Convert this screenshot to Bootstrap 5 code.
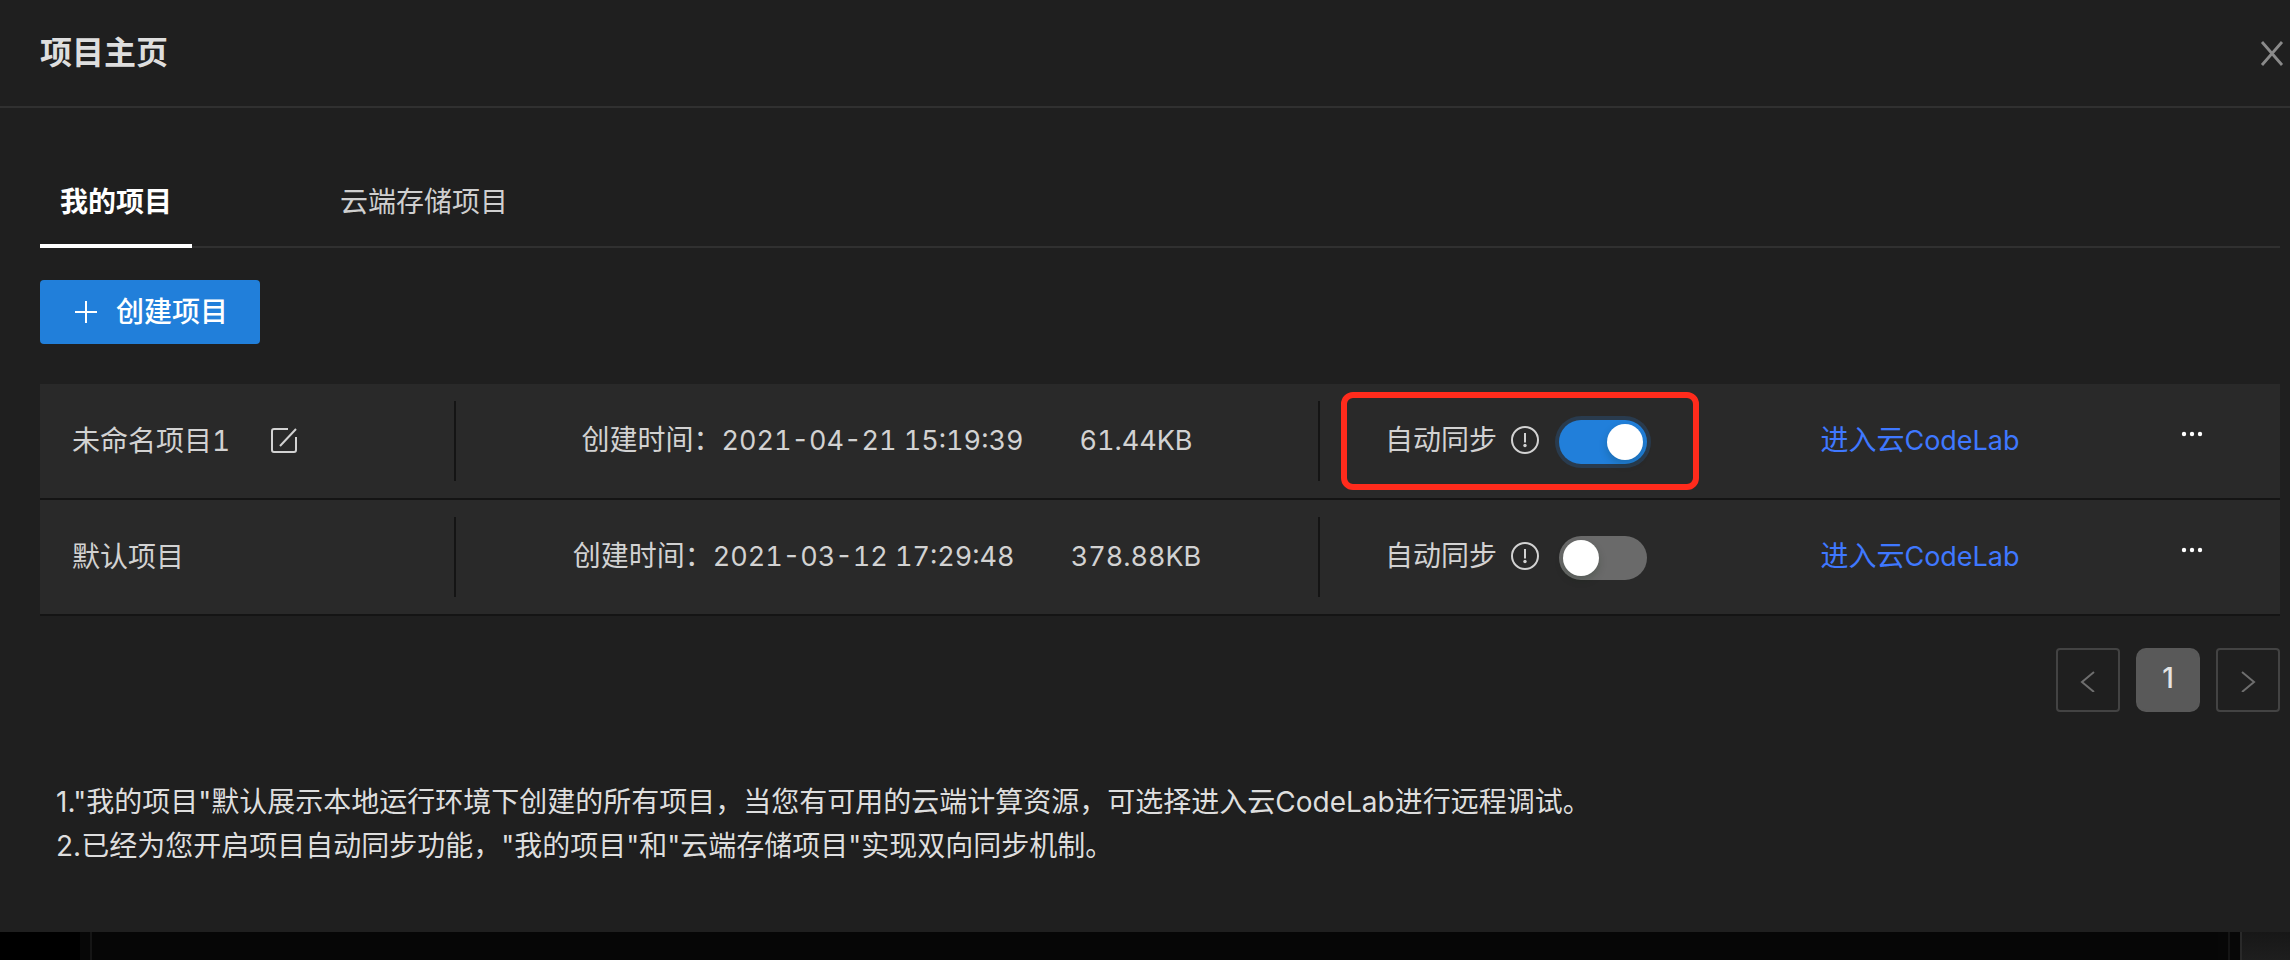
<!DOCTYPE html>
<html lang="zh-CN" data-bs-theme="dark">
<head>
<meta charset="utf-8">
<meta name="viewport" content="width=device-width, initial-scale=1">
<title>项目主页</title>
<link rel="stylesheet" href="https://cdn.jsdelivr.net/npm/bootstrap@5.3.0/dist/css/bootstrap.min.css">
<style>
  body {
    font-family: Inter, "Noto Sans CJK SC", sans-serif;
    font-size: 28px;
    line-height: 44px;
    color: #d2d2d2;
    background: #000;
  }
  .panel { background: #1f1f1f; }
  .panel-head { padding: 29px 4px 29px 40px; border-bottom: 2px solid #303030; }
  .panel-head h1 { font-size: 32px; line-height: 48px; font-weight: 600; color: #dedede; }
  .icon-btn { background: none; border: 0; padding: 0; color: inherit; display: flex; }
  .icon-btn.close-btn { color: #8a8a8a; }
  .panel-main { padding: 72px 10px 64px 40px; }

  .project-tabs { gap: 128px; box-shadow: inset 0 -2px #303030; }
  .project-tabs .nav-link {
    padding: 0 20px 20px;
    color: #cfcfcf;
    border-bottom: 4px solid transparent;
    border-radius: 0;
  }
  .project-tabs .nav-link.active { color: #fff; font-weight: 700; border-color: #fff; }

  .create-btn {
    --bs-btn-bg: #217fda;
    --bs-btn-color: #fff;
    --bs-btn-border-width: 0;
    margin-top: 32px;
    padding: 10px 32px;
    font-size: 28px;
    line-height: 44px;
    font-weight: 500;
    border-radius: 4px;
    gap: 16px;
  }

  .project-list { margin-top: 40px; font-variant-numeric: tabular-nums; }
  .project-row {
    display: grid;
    grid-template-columns: 416fr 864fr 400fr 400fr 160fr;
    align-items: center;
    background: #292929;
    border-bottom: 2px solid #141414;
    padding: 8px 0;
  }
  .cell-name, .cell-info { border-right: 2px solid #141414; height: 80px; }
  .cell-name { padding-left: 32px; gap: 40px; }
  .cell-info { gap: 56px; padding-bottom: 2px; }
  .cell-link { padding-bottom: 2px; }
  .latin { font-size: 27px; line-height: 1; }
  .sync-box {
    border: 6px solid transparent;
    border-radius: 12px;
    padding: 18px 46px 20px 38px;
  }
  .sync-box.marked { border-color: #ff2b1c; }
  .sync-box .hint { margin: 0 20px 0 14px; }
  .sync-switch {
    appearance: none;
    width: 88px;
    height: 44px;
    margin: 4px 0 0;
    padding: 4px;
    border-radius: 22px;
    background: #6a6a6a;
    display: flex;
  }
  .sync-switch::before {
    content: "";
    width: 36px;
    height: 36px;
    border-radius: 50%;
    background: #fff;
    box-shadow: 0 4px 8px rgba(0, 35, 11, .2);
  }
  .sync-switch:checked {
    background: #217fda;
    justify-content: flex-end;
    box-shadow: 0 0 0 4px #293b4e;
  }
  .lab-link { color: #3f78ff; text-decoration: none; }
  .cell-more { padding: 0 16px 14px 0; color: #fff; }

  .pager { margin-top: 32px; gap: 16px; }
  .pager .page-link {
    width: 64px;
    height: 64px;
    padding: 0;
    display: flex;
    align-items: center;
    justify-content: center;
    font-size: 28px;
    font-weight: 500;
    color: #6e6e6e;
    background: none;
    border: 2px solid #434343;
    border-radius: 4px;
  }
  .pager .page-item .page-link { margin-left: 0; border-radius: 4px; }
  .pager .page-item.active .page-link {
    color: #e4e4e4;
    background: #595959;
    border-color: #595959;
    border-radius: 10px;
    padding-bottom: 4px;
  }
  .notes { margin-top: 68px; padding-left: 16px; color: #dedede; }

  /* dimmed editor showing under the panel */
  .editor-back { min-height: 24px; }
  .editor-side { width: 80px; background: #000; }
  .editor-gutter { width: 12px; background: #070707; border-right: 2px solid #151515; }
  .editor-body { background: #060606; }
  .editor-edge { width: 10px; background: #070707; }
  .editor-scroll { width: 50px; background: linear-gradient(#171717, #1e1e1e); border-left: 2px solid #292929; }
</style>
</head>
<body class="d-flex flex-column min-vh-100">
<main class="panel">
  <header class="panel-head d-flex align-items-center justify-content-between">
    <h1 class="m-0">项目主页</h1>
    <button type="button" class="icon-btn close-btn" aria-label="关闭">
      <svg width="28" height="28" viewBox="0 0 28 28" fill="none" stroke="currentColor" stroke-width="2.800"><path d="M4 3 24 26M24 3 4 26"/></svg>
    </button>
  </header>

  <div class="panel-main">
    <ul class="nav project-tabs">
      <li class="nav-item"><a class="nav-link active" href="#" aria-current="page">我的项目</a></li>
      <li class="nav-item"><a class="nav-link" href="#">云端存储项目</a></li>
    </ul>

    <button type="button" class="btn create-btn d-flex align-items-center">
      <svg width="28" height="28" viewBox="0 0 28 28" fill="none" stroke="currentColor" stroke-width="2"><path d="M14 3v22M3 14h22"/></svg>
      <span>创建项目</span>
    </button>

    <ul class="project-list list-unstyled mb-0">
      <li class="project-row">
        <div class="cell-name d-flex align-items-center">
          <span>未命名项目1</span>
          <button type="button" class="icon-btn" aria-label="重命名">
            <svg width="28" height="28" viewBox="0 0 28 28" fill="none" stroke="currentColor" stroke-width="2"><path d="M18 2H4Q2 2 2 4V23Q2 25 4 25H24Q26 25 26 23V10M26 2 10 19"/></svg>
          </button>
        </div>
        <div class="cell-info d-flex align-items-baseline align-content-center flex-wrap justify-content-center">
          <span>创建时间：<span class="latin">2021-04-21 15:19:39</span></span>
          <span class="latin">61.44KB</span>
        </div>
        <div class="d-flex justify-content-center">
          <div class="sync-box marked d-flex align-items-center">
            <label for="sync1">自动同步</label>
            <svg class="hint" width="28" height="28" viewBox="0 0 28 28" fill="none" stroke="currentColor" stroke-width="2"><circle cx="14" cy="14" r="13"/><path d="M14 7v9.500"/><circle cx="14" cy="19.500" r="1.700" fill="currentColor" stroke="none"/></svg>
            <input class="sync-switch" type="checkbox" role="switch" id="sync1" checked>
          </div>
        </div>
        <div class="cell-link text-center"><a class="lab-link" href="#">进入云<span class="latin">CodeLab</span></a></div>
        <div class="cell-more d-flex justify-content-center">
          <button type="button" class="icon-btn" aria-label="更多">
            <svg width="24" height="8" viewBox="0 0 24 8" fill="currentColor"><circle cx="4" cy="4" r="2.200"/><circle cx="12" cy="4" r="2.200"/><circle cx="20" cy="4" r="2.200"/></svg>
          </button>
        </div>
      </li>
      <li class="project-row">
        <div class="cell-name d-flex align-items-center">
          <span>默认项目</span>
        </div>
        <div class="cell-info d-flex align-items-baseline align-content-center flex-wrap justify-content-center">
          <span>创建时间：<span class="latin">2021-03-12 17:29:48</span></span>
          <span class="latin">378.88KB</span>
        </div>
        <div class="d-flex justify-content-center">
          <div class="sync-box d-flex align-items-center">
            <label for="sync2">自动同步</label>
            <svg class="hint" width="28" height="28" viewBox="0 0 28 28" fill="none" stroke="currentColor" stroke-width="2"><circle cx="14" cy="14" r="13"/><path d="M14 7v9.500"/><circle cx="14" cy="19.500" r="1.700" fill="currentColor" stroke="none"/></svg>
            <input class="sync-switch" type="checkbox" role="switch" id="sync2">
          </div>
        </div>
        <div class="cell-link text-center"><a class="lab-link" href="#">进入云<span class="latin">CodeLab</span></a></div>
        <div class="cell-more d-flex justify-content-center">
          <button type="button" class="icon-btn" aria-label="更多">
            <svg width="24" height="8" viewBox="0 0 24 8" fill="currentColor"><circle cx="4" cy="4" r="2.200"/><circle cx="12" cy="4" r="2.200"/><circle cx="20" cy="4" r="2.200"/></svg>
          </button>
        </div>
      </li>
    </ul>

    <nav aria-label="分页">
      <ul class="pagination pager justify-content-end mb-0">
        <li class="page-item"><button type="button" class="page-link" aria-label="上一页">
          <svg width="24" height="24" viewBox="0 0 24 24" fill="none" stroke="currentColor" stroke-width="2"><path d="M18 4 6 14 18 24"/></svg>
        </button></li>
        <li class="page-item active" aria-current="page"><button type="button" class="page-link">1</button></li>
        <li class="page-item"><button type="button" class="page-link" aria-label="下一页">
          <svg width="24" height="24" viewBox="0 0 24 24" fill="none" stroke="currentColor" stroke-width="2"><path d="M6 4 18 14 6 24"/></svg>
        </button></li>
      </ul>
    </nav>

    <div class="notes">
      <p class="m-0">1."我的项目"默认展示本地运行环境下创建的所有项目，当您有可用的云端计算资源，可选择进入云CodeLab进行远程调试。</p>
      <p class="m-0">2.已经为您开启项目自动同步功能，"我的项目"和"云端存储项目"实现双向同步机制。</p>
    </div>
  </div>
</main>

<div class="editor-back d-flex flex-grow-1" aria-hidden="true">
  <div class="editor-side"></div>
  <div class="editor-gutter"></div>
  <div class="editor-body flex-grow-1"></div>
  <div class="editor-gutter"></div>
  <div class="editor-edge"></div>
  <div class="editor-scroll"></div>
</div>
<script src="https://cdn.jsdelivr.net/npm/bootstrap@5.3.0/dist/js/bootstrap.bundle.min.js"></script>
</body>
</html>
